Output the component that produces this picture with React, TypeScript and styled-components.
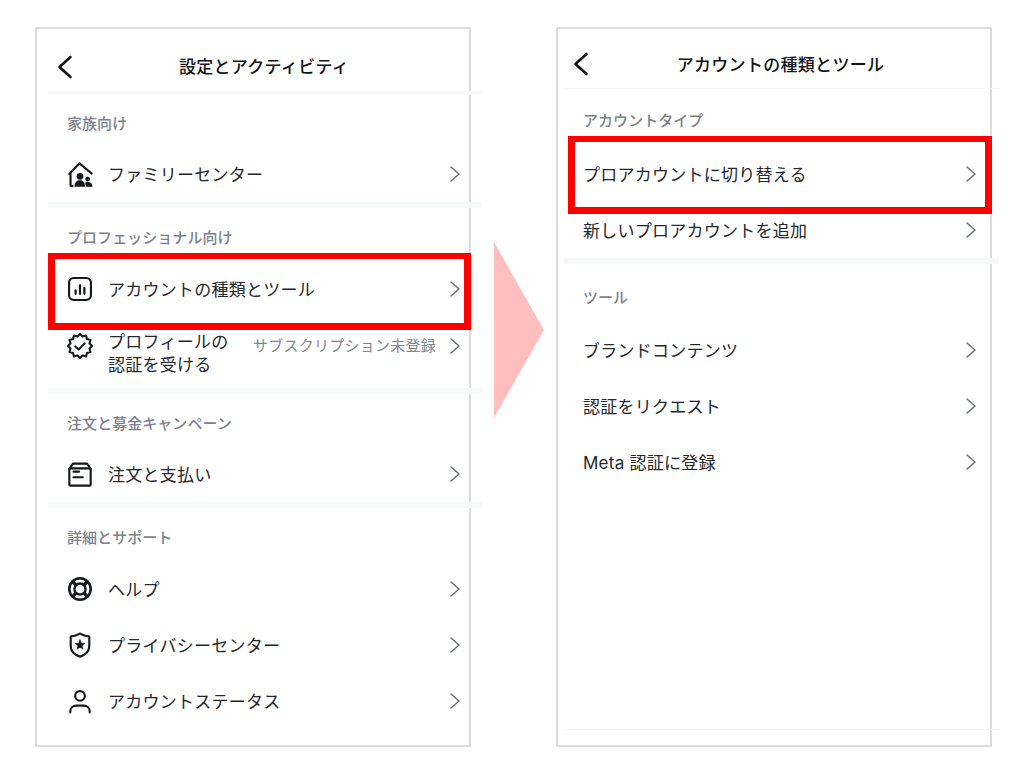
import React from 'react';
import styled, { createGlobalStyle } from 'styled-components';

const GlobalStyle = createGlobalStyle`
  html, body {
    margin: 0;
    background: #fff;
  }
  body {
    font-family: Inter, "Noto Sans CJK JP", "Noto Sans", sans-serif;
    color: #1c1e21;
  }
`;

const Page = styled.div`
  display: flex;
  align-items: flex-start;
  width: 1024px;
  height: 768px;
  box-sizing: border-box;
  padding: 27px 0 0 35px;
  overflow: hidden;
`;

const Panel = styled.section<{ $inset: number }>`
  display: flex;
  flex-direction: column;
  width: 436px;
  height: 720px;
  box-sizing: border-box;
  border: 2px solid #dddddd;
  padding-left: ${p => p.$inset}px;
`;

const Header = styled.header<{ $height: number; $top: number; $nudge: number }>`
  position: relative;
  display: flex;
  align-items: center;
  justify-content: center;
  flex: none;
  height: ${p => p.$height}px;
  padding: ${p => p.$top}px 0 0 ${p => p.$nudge}px;
  box-sizing: border-box;
`;

const Title = styled.h1`
  margin: 0;
  font-size: 17px;
  line-height: 24px;
  font-weight: 500;
  letter-spacing: 0.3px;
  color: #111317;
`;

const BackIcon = styled.svg`
  position: absolute;
  left: 9px;
  bottom: 12px;
`;

const Divider = styled.div<{ $size: number; $overhang: number }>`
  flex: none;
  height: ${p => p.$size}px;
  margin-right: -${p => p.$overhang}px;
  background: #f7f8f8;
`;

const Section = styled.div<{ $top: number }>`
  flex: none;
  padding-top: ${p => p.$top}px;
`;

const Label = styled.h2<{ $gap: number }>`
  margin: 0 0 ${p => p.$gap}px;
  padding-left: 19px;
  height: 28px;
  font-size: 15px;
  line-height: 30px;
  font-weight: 500;
  letter-spacing: 0.05px;
  color: #7c828c;
`;

const Row = styled.div<{ $height?: number; $right: number }>`
  position: relative;
  display: flex;
  align-items: center;
  height: ${p => p.$height ?? 56}px;
  padding: 0 ${p => p.$right}px 0 19px;
  box-sizing: border-box;
`;

const IconBox = styled.span<{ $shift?: number }>`
  display: flex;
  flex: none;
  align-items: center;
  justify-content: center;
  width: 26px;
  height: 26px;
  margin-right: 15px;
  transform: translateY(${p => p.$shift ?? 0}px);
`;

const RowText = styled.span`
  flex: 1;
  padding-top: 2px;
  font-size: 17px;
  line-height: 23px;
  letter-spacing: 0.25px;
  color: #25272b;
`;

const Status = styled.span`
  margin-right: 14px;
  font-size: 15px;
  line-height: 20px;
  letter-spacing: 0.25px;
  color: #80868f;
  transform: translateY(-7px);
`;

const Chevron = styled.svg<{ $shift?: number }>`
  flex: none;
  transform: translateY(${p => p.$shift ?? 0}px);
`;

const Highlight = styled.div<{ $top: number; $bottom: number; $left: number }>`
  position: absolute;
  top: -${p => p.$top}px;
  bottom: -${p => p.$bottom}px;
  left: ${p => p.$left}px;
  right: -2px;
  border: 7px solid #ff0000;
  border-width: 6.5px 7px 7px;
  pointer-events: none;
`;

const Arrow = styled.div`
  flex: none;
  width: 50px;
  height: 176px;
  margin: 215px 12px 0 23px;
  background: #ffbfbf;
  clip-path: polygon(0 0, 100% 50%, 0 100%);
`;

const Footer = styled.div`
  flex: none;
  height: 1px;
  margin-top: auto;
  margin-bottom: 15px;
  margin-right: -9px;
  background: #f3f4f4;
`;

const starPoints = (count: number, outer: number, inner: number) =>
  Array.from({ length: count * 2 }, (_, i) => {
    const r = i % 2 === 0 ? outer : inner;
    const a = (Math.PI * i) / count - Math.PI / 2;
    return `${(14 + r * Math.cos(a)).toFixed(2)},${(14 + r * Math.sin(a)).toFixed(2)}`;
  }).join(' ');

const RowChevron: React.FC<{ shift?: number }> = ({ shift }) => (
  <Chevron $shift={shift} width="10" height="16" viewBox="0 0 10 16" fill="none">
    <path d="M1 1l8 7-8 7" stroke="#6b7078" strokeWidth="1.5" strokeLinecap="round" strokeLinejoin="round" />
  </Chevron>
);

const Back: React.FC = () => (
  <BackIcon width="16" height="24" viewBox="0 0 16 24" fill="none">
    <path d="M13.5 2L2.5 12l11 10" stroke="#111" strokeWidth="2.6" strokeLinecap="round" strokeLinejoin="round" />
  </BackIcon>
);

const Icon: React.FC<{ children: React.ReactNode; shift?: number }> = ({ children, shift }) => (
  <IconBox $shift={shift}>
    <svg width="28" height="28" viewBox="0 0 28 28" fill="none" stroke="#16181c" strokeWidth="2.3" strokeLinecap="round" strokeLinejoin="round">
      {children}
    </svg>
  </IconBox>
);

const FamilyIcon = () => (
  <Icon>
    <path d="M2.500 14L13.500 2.500 26.500 13.500" />
    <path d="M3.800 14v12.200a.8.8 0 0 0 .8.8H6" />
    <g fill="#16181c" stroke="none">
      <circle cx="14" cy="16.500" r="3.600" />
      <path d="M8 27.800c0-4.300 2.400-7 6-7s5.500 2.700 5.500 7z" />
      <circle cx="22.300" cy="19.500" r="2.600" />
      <path d="M20.600 27.800c0-1.900-.4-3.300-1.400-4.500.8-.4 1.900-.6 3.100-.6 3 0 5.200 1.900 5.200 5.100z" />
    </g>
  </Icon>
);

const ChartIcon = () => (
  <Icon>
    <rect x="2.200" y="2.200" width="23.600" height="23.600" rx="5" />
    <path d="M9.300 15.500v3.700M14 10v9.200M18.700 12.800v6.400" strokeWidth="2.400" />
  </Icon>
);

const BadgeIcon = () => (
  <Icon shift={-7}>
    <polygon points={starPoints(12, 13, 10.600)} />
    <path d="M9 14.500l3.600 3.300 6.400-6.600" />
  </Icon>
);

const OrderIcon = () => (
  <Icon>
    <path d="M2.500 8.500L6.500 2.800h15l4 5.700" />
    <rect x="2.500" y="8" width="23" height="18.500" rx="1" />
    <path d="M7 11.500h6M7 17.500h10" />
  </Icon>
);

const HelpIcon = () => (
  <Icon>
    <circle cx="14" cy="14" r="11.500" strokeWidth="2.800" />
    <circle cx="14" cy="14" r="6" strokeWidth="2.600" />
    <path d="M6 6l4 4M22 6l-4 4M6 22l4-4M22 22l-4-4" strokeWidth="3.400" strokeLinecap="butt" />
  </Icon>
);

const ShieldIcon = () => (
  <Icon>
    <path d="M14 1.800c3 1.700 6.500 2.700 10 3v10.400c0 5.500-4 9.500-10 11.300-6-1.800-10-5.800-10-11.300V4.800c3.500-.3 7-1.300 10-3z" />
    <polygon points={starPoints(5, 5.400, 2.300)} fill="#16181c" strokeWidth="0.800" />
  </Icon>
);

const UserIcon = () => (
  <Icon>
    <circle cx="14" cy="8.500" r="5.200" />
    <path d="M3.500 26.500v-1c0-4 3-6.500 6.500-6.500h8c3.500 0 6.500 2.500 6.500 6.500v1" />
  </Icon>
);

export default function App() {
  return (
    <>
      <GlobalStyle />
      <Page>
        <Panel $inset={11}>
          <Header $height={62} $top={14} $nudge={11}>
            <Back />
            <Title>設定とアクティビティ</Title>
          </Header>
          <Divider $size={4} $overhang={13} />
          <Section $top={14}>
            <Label $gap={9}>家族向け</Label>
            <Row $right={9}>
              <FamilyIcon />
              <RowText>ファミリーセンター</RowText>
              <RowChevron />
            </Row>
          </Section>
          <Divider $size={6} $overhang={13} />
          <Section $top={15}>
            <Label $gap={10}>プロフェッショナル向け</Label>
            <Row $right={9}>
              <ChartIcon />
              <RowText>アカウントの種類とツール</RowText>
              <RowChevron />
              <Highlight $top={8} $bottom={13} $left={0} />
            </Row>
            <Row $right={9} $height={71}>
              <BadgeIcon />
              <RowText>プロフィールの<br />認証を受ける</RowText>
              <Status>サブスクリプション未登録</Status>
              <RowChevron shift={-7} />
            </Row>
          </Section>
          <Divider $size={6} $overhang={13} />
          <Section $top={15}>
            <Label $gap={9}>注文と募金キャンペーン</Label>
            <Row $right={9}>
              <OrderIcon />
              <RowText>注文と支払い</RowText>
              <RowChevron />
            </Row>
          </Section>
          <Divider $size={6} $overhang={13} />
          <Section $top={15}>
            <Label $gap={10}>詳細とサポート</Label>
            <Row $right={9}>
              <HelpIcon />
              <RowText>ヘルプ</RowText>
              <RowChevron />
            </Row>
            <Row $right={9}>
              <ShieldIcon />
              <RowText>プライバシーセンター</RowText>
              <RowChevron />
            </Row>
            <Row $right={9}>
              <UserIcon />
              <RowText>アカウントステータス</RowText>
              <RowChevron />
            </Row>
          </Section>
        </Panel>
        <Arrow />
        <Panel $inset={6}>
          <Header $height={59} $top={13} $nudge={7}>
            <Back />
            <Title>アカウントの種類とツール</Title>
          </Header>
          <Divider $size={1} $overhang={9} />
          <Section $top={17}>
            <Label $gap={12}>アカウントタイプ</Label>
            <Row $right={14}>
              <RowText>プロアカウントに切り替える</RowText>
              <RowChevron />
              <Highlight $top={10} $bottom={12} $left={4} />
            </Row>
            <Row $right={14}>
              <RowText>新しいプロアカウントを追加</RowText>
              <RowChevron />
            </Row>
          </Section>
          <Divider $size={6} $overhang={9} />
          <Section $top={19}>
            <Label $gap={11}>ツール</Label>
            <Row $right={14}>
              <RowText>ブランドコンテンツ</RowText>
              <RowChevron />
            </Row>
            <Row $right={14}>
              <RowText>認証をリクエスト</RowText>
              <RowChevron />
            </Row>
            <Row $right={14}>
              <RowText>Meta 認証に登録</RowText>
              <RowChevron />
            </Row>
          </Section>
          <Footer />
        </Panel>
      </Page>
    </>
  );
}
